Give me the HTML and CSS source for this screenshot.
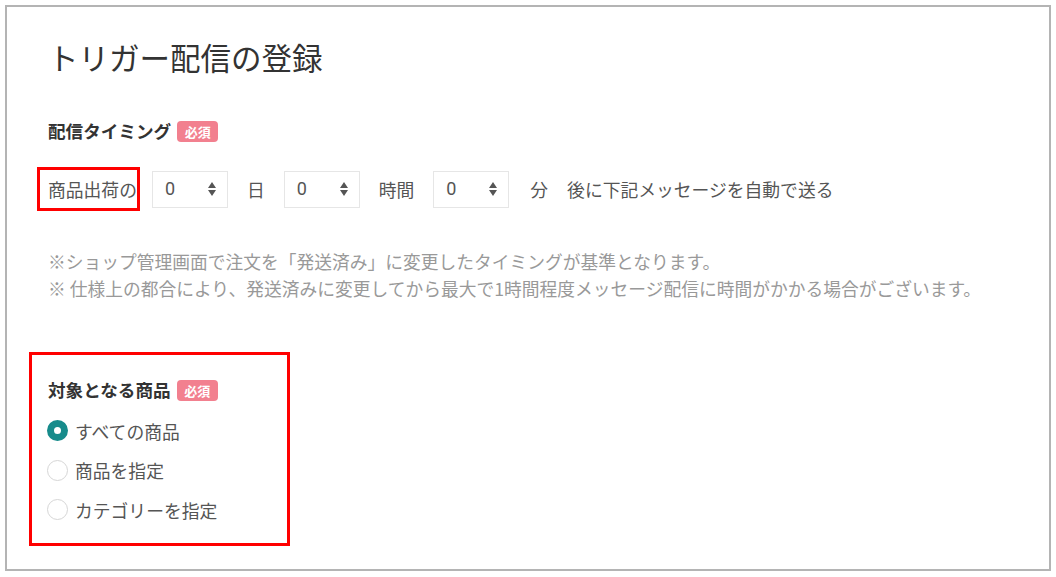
FILE: index.html
```html
<!DOCTYPE html>
<html lang="ja">
<head>
<meta charset="utf-8">
<link rel="stylesheet" href="styles.css">
</head>
<body>
<div class="frame">
  <h1 class="title">トリガー配信の登録</h1>

  <div class="field-label">配信タイミング<span class="badge">必須</span></div>
  <div class="timing-row">
    <span class="hl">商品出荷の</span>
    <div class="num-input"><span>0</span>
      <svg class="spin" width="10" height="16" viewBox="0 0 10 16"><path d="M5 1 L9 7 H1 Z M1 9 H9 L5 15 Z" fill="#555"/></svg>
    </div>
    <span class="unit">日</span>
    <div class="num-input"><span>0</span>
      <svg class="spin" width="10" height="16" viewBox="0 0 10 16"><path d="M5 1 L9 7 H1 Z M1 9 H9 L5 15 Z" fill="#555"/></svg>
    </div>
    <span class="unit">時間</span>
    <div class="num-input"><span>0</span>
      <svg class="spin" width="10" height="16" viewBox="0 0 10 16"><path d="M5 1 L9 7 H1 Z M1 9 H9 L5 15 Z" fill="#555"/></svg>
    </div>
    <span class="unit unit-min">分</span>
    <span class="unit">後に下記メッセージを自動で送る</span>
  </div>

  <div class="notes">
    <p>※ショップ管理画面で注文を「発送済み」に変更したタイミングが基準となります。</p>
    <p>※ 仕様上の都合により、発送済みに変更してから最大で1時間程度メッセージ配信に時間がかかる場合がございます。</p>
  </div>

  <div class="target-box">
    <div class="field-label">対象となる商品<span class="badge">必須</span></div>
    <ul class="radios">
      <li><span class="radio checked"></span>すべての商品</li>
      <li><span class="radio"></span>商品を指定</li>
      <li><span class="radio"></span>カテゴリーを指定</li>
    </ul>
  </div>
</div>
</body>
</html>
```

FILE: styles.css
```css
html, body {
  margin: 0;
  padding: 0;
  background: #fff;
}
body {
  font-family: "Noto Sans CJK JP", "Noto Sans", sans-serif;
  color: #555;
}
.frame {
  box-sizing: border-box;
  margin: 5px;
  width: 1046px;
  height: 566px;
  border: 2px solid #b4b4b4;
  padding: 28px 0 0 41px;
}
.title {
  margin: 0;
  font-size: 30.5px;
  line-height: 44px;
  font-weight: 400;
  color: #333;
}
.field-label {
  margin-top: 39px;
  display: flex;
  align-items: center;
  font-size: 17.6px;
  line-height: 26px;
  font-weight: 700;
  color: #333;
}
.badge {
  margin-left: 6px;
  width: 41px;
  height: 21px;
  border-radius: 4px;
  background: #f2808f;
  color: #fff;
  font-size: 13px;
  font-weight: 700;
  line-height: 21px;
  text-align: center;
}
.timing-row {
  margin-top: 23px;
  display: flex;
  align-items: center;
  gap: 19px;
  font-size: 17.8px;
  line-height: 26px;
}
.hl {
  box-sizing: border-box;
  height: 44px;
  display: inline-flex;
  align-items: center;
  border: 3px solid #f00;
  padding-left: 8px;
  margin-left: -11px;
  margin-right: -7px;
  white-space: nowrap;
}
.num-input {
  box-sizing: border-box;
  width: 76px;
  height: 37px;
  border: 1px solid #e6e6e6;
  display: flex;
  align-items: center;
  justify-content: space-between;
  padding: 0 10px 0 12px;
  font-family: "Roboto", "Noto Sans", sans-serif;
  font-size: 18px;
  color: #555;
}
.spin {
  display: block;
}
.unit {
  white-space: nowrap;
}
.unit-min {
  margin-left: 2px;
}
.notes {
  margin-top: 37px;
  font-size: 17.75px;
  line-height: 27px;
  color: #999;
}
.notes p {
  margin: 0;
  white-space: nowrap;
}
.target-box {
  box-sizing: border-box;
  margin-top: 50px;
  margin-left: -19px;
  width: 261px;
  height: 194px;
  border: 3px solid #f00;
  padding: 22px 0 0 16px;
}
.target-box .field-label {
  margin-top: 0;
}
.radios {
  list-style: none;
  margin: 8px 0 0 0;
  padding: 0;
}
.radios li {
  height: 39.5px;
  display: flex;
  align-items: center;
  font-size: 17.8px;
  color: #555;
}
.radio {
  box-sizing: border-box;
  width: 21px;
  height: 21px;
  border-radius: 50%;
  border: 1px solid #d6d6d6;
  margin-left: -1px;
  margin-right: 7px;
  background: #fff;
}
.radio.checked {
  border: 7.5px solid #178b8b;
  background: #fff;
}
```
